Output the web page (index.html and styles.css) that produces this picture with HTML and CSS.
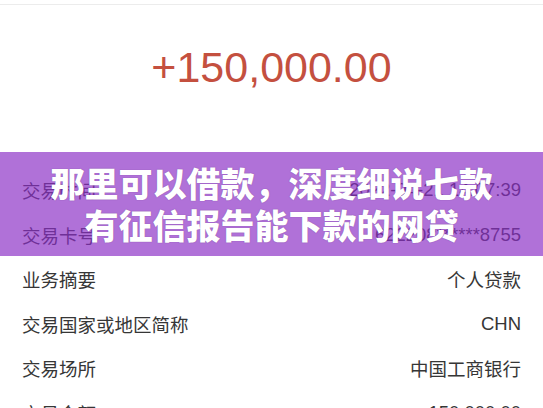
FILE: index.html
```html
<!DOCTYPE html>
<html lang="zh-CN">
<head>
    <meta charset="UTF-8">
    <meta name="viewport" content="width=device-width, initial-scale=1.0">
    <title>交易详情</title>
    <link rel="stylesheet" href="styles.css">
</head>
<body>
    <div class="page">
        <div class="topline"></div>
        <div class="amount">+150,000.00</div>

        <div class="list">
            <div class="row"><span>交易时间</span><span>2022-04-21 14:07:39</span></div>
            <div class="row"><span>交易卡号</span><span>622208******8755</span></div>
            <div class="row"><span>业务摘要</span><span>个人贷款</span></div>
            <div class="row"><span>交易国家或地区简称</span><span>CHN</span></div>
            <div class="row"><span>交易场所</span><span>中国工商银行</span></div>
            <div class="row"><span>交易金额</span><span>150,000.00</span></div>
        </div>

        <div class="banner">
            <p>那里可以借款，深度细说七款</p>
            <p>有征信报告能下款的网贷</p>
        </div>
    </div>
</body>
</html>
```

FILE: styles.css
```css
html,body{
    margin: 0;
    padding: 0;
    height: 100%;
    overflow: hidden;
    background: #fff;
}

.page{
    position: relative;
    font-family: "Liberation Sans", "Noto Sans CJK SC", sans-serif;
    color: #363636;
}

.topline{
    height: 4px;
    border-bottom: 1px solid #ececec;
}

.amount{
    padding-top: 36px;
    height: 127px;
    line-height: 52px;
    font-size: 43px;
    text-align: center;
    color: #c4503f;
}

.list{
    padding: 0 22px;
}

.row{
    display: flex;
    justify-content: space-between;
    align-items: center;
    height: 44.5px;
    font-size: 18.5px;
}

/* title band laid over the list */
.banner{
    position: absolute;
    left: 0;
    right: 0;
    top: 152px;
    height: 104px;
    box-sizing: border-box;
    padding-top: 10px;
    background: rgba(139, 45, 198, 0.68);
    text-align: center;
}

.banner p{
    margin: 0;
    height: 42px;
    line-height: 42px;
    font-family: "Noto Sans CJK SC", sans-serif;
    font-weight: 900;
    font-size: 34px;
    color: #fff;
    text-shadow: 0 0 1px rgba(60, 20, 90, 0.5);
}
```
